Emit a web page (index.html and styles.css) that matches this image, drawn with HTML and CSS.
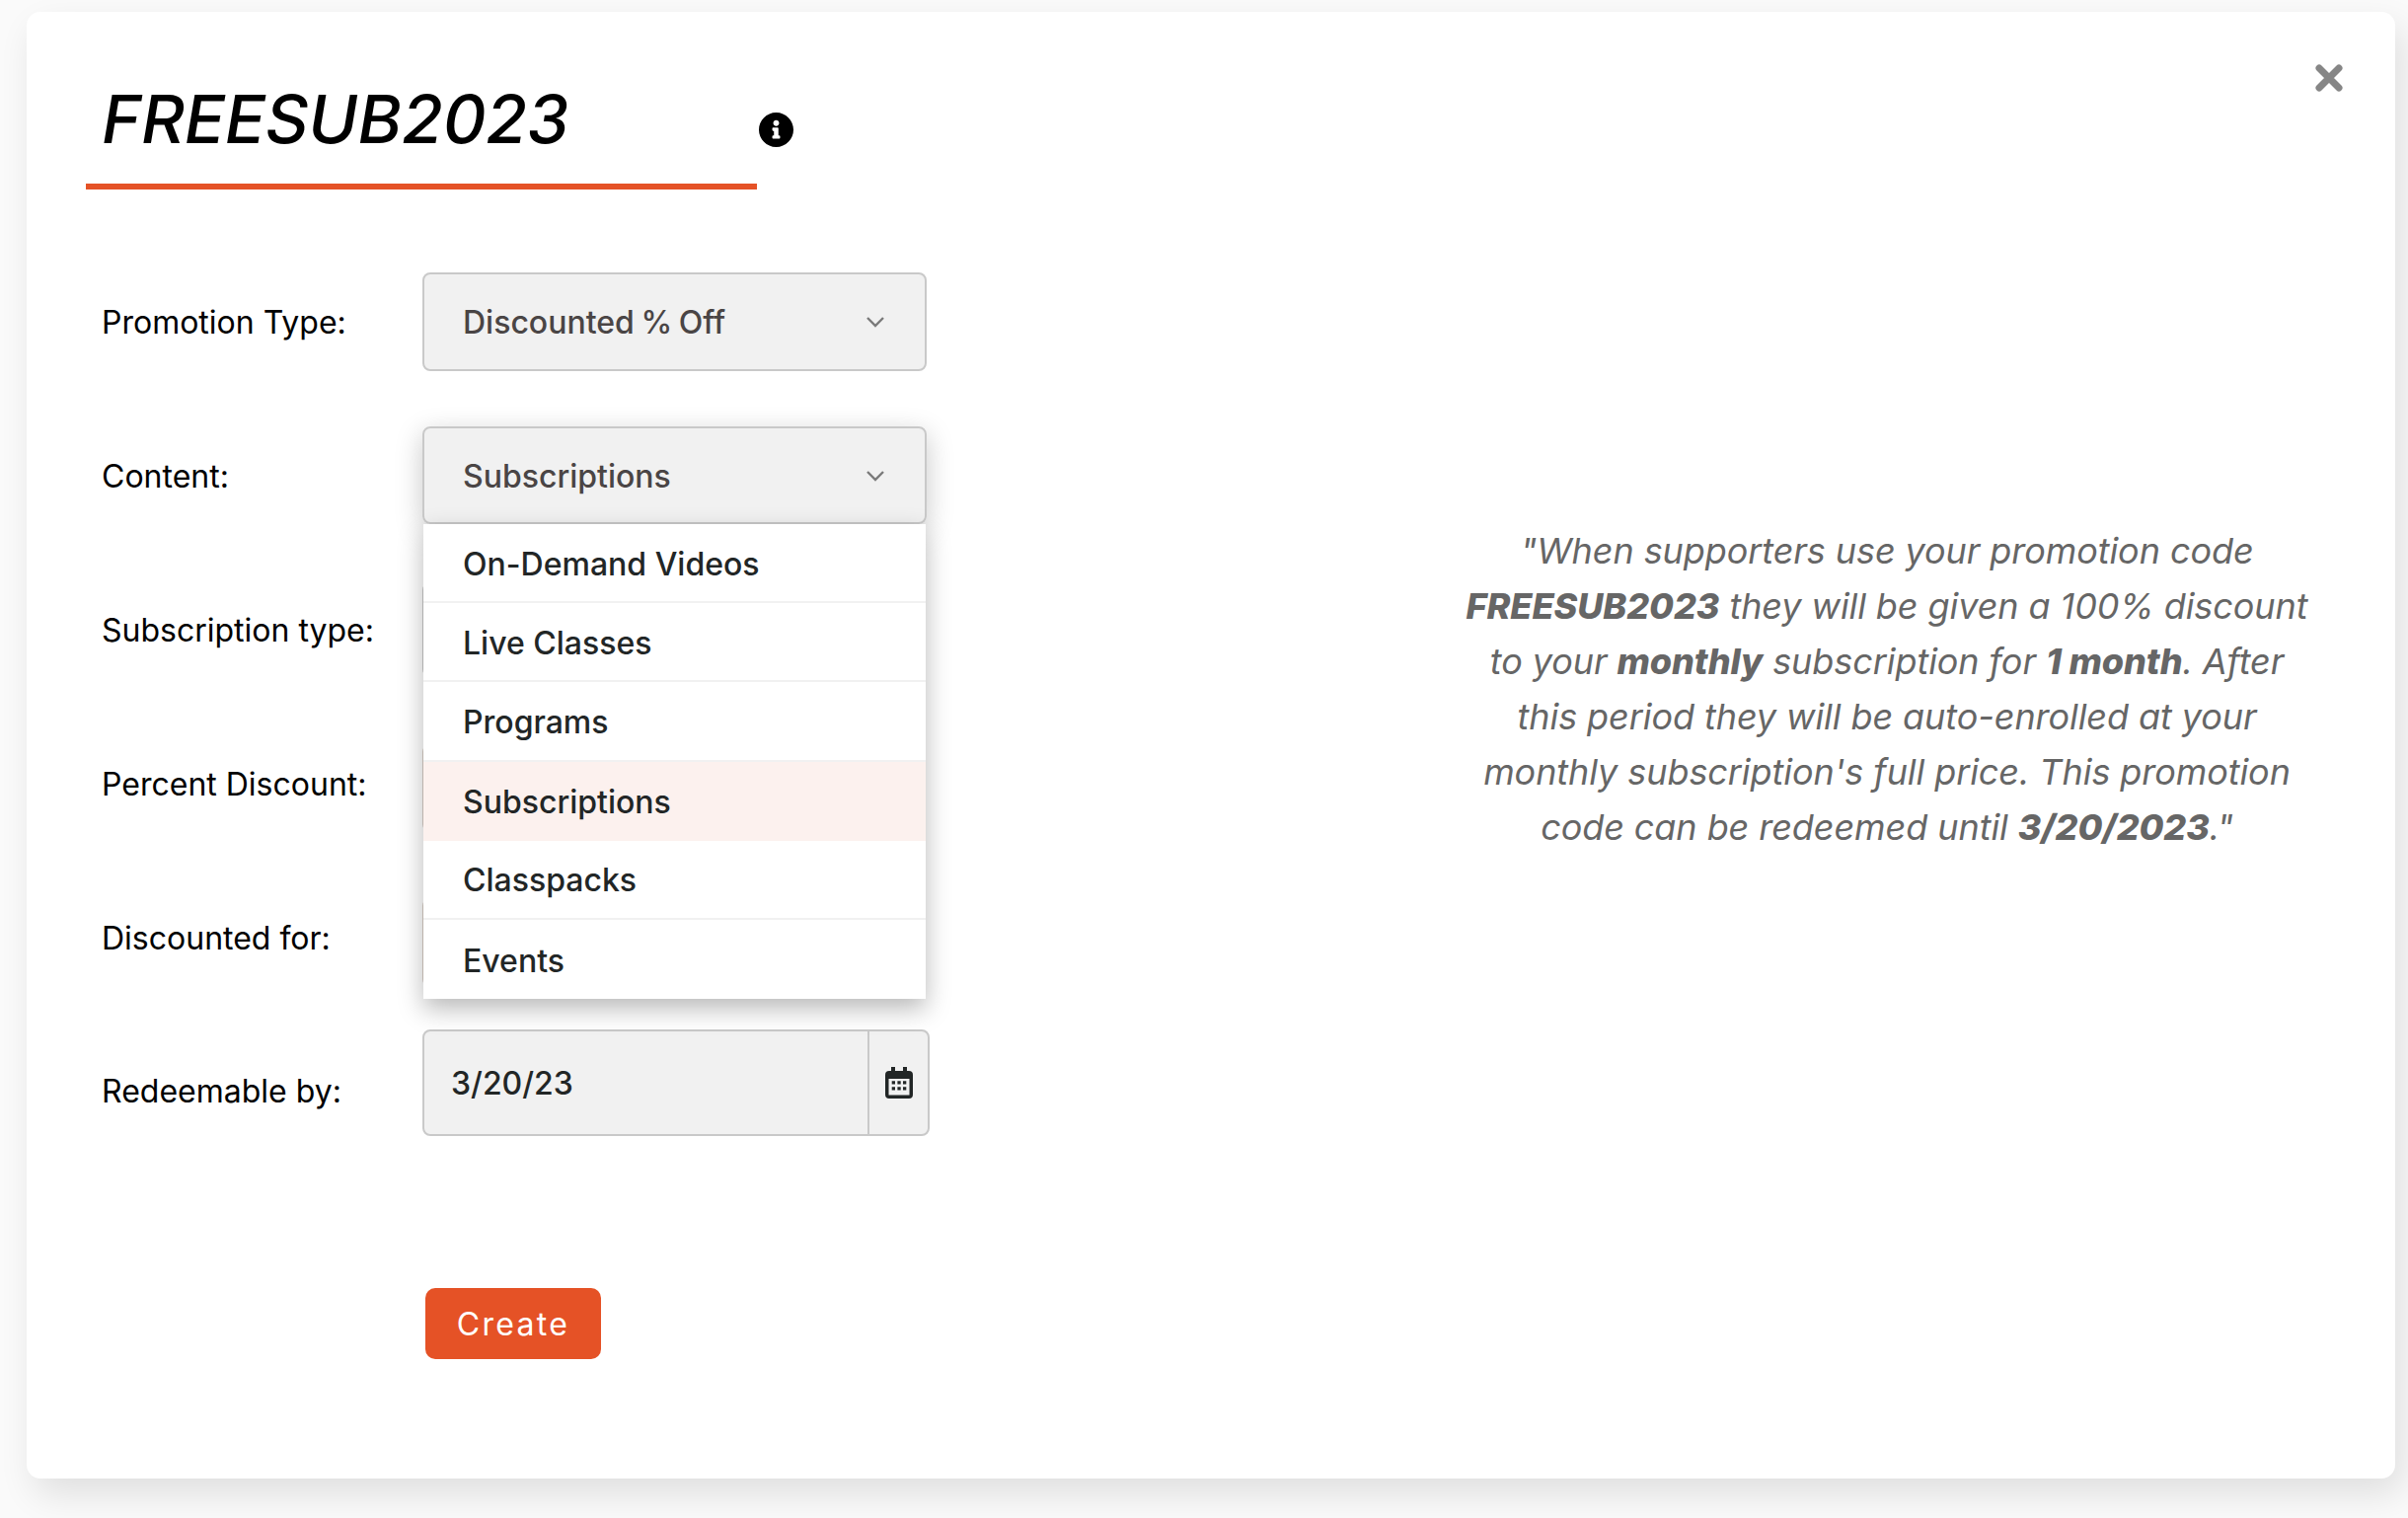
FILE: index.html
```html
<!DOCTYPE html>
<html lang="en">

<head>
    <meta charset="UTF-8">
    <title>Promotion</title>
    <link rel="stylesheet" href="styles.css">
</head>

<body>

    <div class="modal">

        <svg class="close" viewBox="0 0 28 28"><path d="M4 4L24 24M24 4L4 24" /></svg>

        <div class="form-col">

            <!-- Promotion code -->
            <div class="title-row">
                <div class="promo-code">FREESUB2023</div>
                <svg class="info-icon" viewBox="8 8 496 496"><path d="M256 8C119.043 8 8 119.083 8 256c0 136.997 111.043 248 248 248s248-111.003 248-248C504 119.083 392.957 8 256 8zm0 110c23.196 0 42 18.804 42 42s-18.804 42-42 42-42-18.804-42-42 18.804-42 42-42zm56 254c0 6.627-5.373 12-12 12h-88c-6.627 0-12-5.373-12-12v-24c0-6.627 5.373-12 12-12h12v-64h-12c-6.627 0-12-5.373-12-12v-24c0-6.627 5.373-12 12-12h64c6.627 0 12 5.373 12 12v100h12c6.627 0 12 5.373 12 12v24z" /></svg>
            </div>

            <!-- Fields -->
            <div class="row row-type">
                <label class="label">Promotion Type:</label>
                <div class="field select">
                    <span>Discounted % Off</span>
                    <svg class="chevron" viewBox="0 0 20 12"><path d="M2 2L10 10L18 2" /></svg>
                </div>
            </div>

            <div class="row row-content">
                <label class="label">Content:</label>
                <div class="select-wrap">
                    <div class="field select">
                        <span>Subscriptions</span>
                        <svg class="chevron" viewBox="0 0 20 12"><path d="M2 2L10 10L18 2" /></svg>
                    </div>
                    <ul class="dropdown">
                        <li>On-Demand Videos</li>
                        <li>Live Classes</li>
                        <li>Programs</li>
                        <li class="selected">Subscriptions</li>
                        <li>Classpacks</li>
                        <li>Events</li>
                    </ul>
                </div>
            </div>

            <div class="row row-sub">
                <label class="label">Subscription type:</label>
                <div class="field covered"></div>
            </div>

            <div class="row row-percent">
                <label class="label">Percent Discount:</label>
                <div class="field covered tinted"></div>
            </div>

            <div class="row row-for">
                <label class="label">Discounted for:</label>
                <div class="field covered tinted"></div>
            </div>

            <div class="row row-date">
                <label class="label">Redeemable by:</label>
                <div class="field date">
                    <span class="date-value">3/20/23</span>
                    <div class="date-btn">
                        <svg class="calendar" viewBox="0 0 28 32">
                            <path d="M6 0h4v5H6zM18 0h4v5h-4z" />
                            <path fill-rule="evenodd" d="M4 4h20a4 4 0 0 1 4 4v20a4 4 0 0 1-4 4H4a4 4 0 0 1-4-4V8a4 4 0 0 1 4-4zM3.5 12v16.5h21V12z" />
                            <path d="M6.7 14.3H10v3.300H6.700zM12.400 14.300h3.300v3.300h-3.300zM18 14.300h3.300v3.300H18zM6.700 20.300H10v3.300H6.700zM12.400 20.300h3.300v3.300h-3.300zM18 20.300h3.300v3.300H18z" />
                        </svg>
                    </div>
                </div>
            </div>

            <button class="create-btn">Create</button>
        </div>

        <!-- Summary -->
        <p class="summary">
            "When supporters use your promotion code<br>
            <strong>FREESUB2023</strong> they will be given a 100% discount<br>
            to your <strong>monthly</strong> subscription for <strong>1 month</strong>. After<br>
            this period they will be auto-enrolled at your<br>
            monthly subscription's full price. This promotion<br>
            code can be redeemed until <strong>3/20/2023</strong>."
        </p>

    </div>

</body>

</html>
```

FILE: styles.css
```css
* {
    box-sizing: border-box;
}

body {
    font-family: Inter, "Liberation Sans", sans-serif;
    background-color: #fafafa;
    margin: 0;
    height: 100vh;
    overflow: hidden;
    padding: 12px 13px 40px 27px;
}

.modal {
    position: relative;
    display: flex;
    height: 1486px;
    padding-left: 60px;
    background-color: #fff;
    border-radius: 14px;
    box-shadow: 8px 16px 36px rgba(0, 0, 0, 0.11);
}

.close {
    position: absolute;
    top: 53px;
    right: 53px;
    width: 28px;
    height: 28px;
    fill: none;
    stroke: #868686;
    stroke-width: 7;
    stroke-linecap: round;
}

.form-col {
    width: 860px;
    flex-shrink: 0;
}

.title-row {
    display: flex;
    height: 180px;
    margin-bottom: 84px;
}

.promo-code {
    width: 680px;
    height: 180px;
    padding: 68px 0 0 16px;
    border-bottom: 6px solid #e55226;
    font-size: 68px;
    line-height: 80px;
    font-style: italic;
    font-weight: 550;
    letter-spacing: -0.2px;
    color: #000;
}

.info-icon {
    width: 35px;
    height: 35px;
    margin: 102px 0 0 1.5px;
    fill: #000;
}

.row {
    display: flex;
    align-items: center;
}

.label {
    width: 341px;
    padding-left: 16px;
    font-size: 32px;
    color: #000;
}

.field {
    position: relative;
    width: 511px;
    height: 100%;
    background-color: #f1f1f1;
    border: 2px solid #c9c9c9;
    border-radius: 8px;
}

/* these sit behind the open dropdown, only the left edge shows */
.covered {
    width: 505px;
}

.row-type {
    height: 100px;
    margin-bottom: 56px;
}

.row-content {
    height: 99px;
    margin-bottom: 59px;
}

.row-content .label {
    padding-top: 2px;
}

.row-sub {
    height: 96px;
    margin-bottom: 68px;
}

.row-percent {
    height: 89px;
    margin-bottom: 67px;
}

.row-percent .label {
    padding-bottom: 8px;
}

.row-for {
    height: 90px;
    margin-bottom: 43px;
}

.row-for .label {
    padding-bottom: 10px;
}

.row-date {
    height: 108px;
    margin-bottom: 154px;
}

.row-date .label {
    padding-top: 16px;
}

.tinted {
    border-color: #d9cfc7;
}

.select {
    display: flex;
    align-items: center;
    justify-content: space-between;
    padding: 0 40px 0 39px;
    font-size: 32px;
    font-weight: 500;
    word-spacing: -2px;
    color: #4a4545;
}

.select-wrap .select {
    padding-top: 1px;
}

.chevron {
    width: 20px;
    height: 12px;
    fill: none;
    stroke: #7a7a7a;
    stroke-width: 2.4;
}

.select-wrap {
    position: relative;
    height: 100%;
    box-shadow: 0 8px 28px rgba(0, 0, 0, 0.22);
    border-radius: 8px;
}

.dropdown {
    position: absolute;
    z-index: 5;
    top: 100%;
    left: 1px;
    right: 1px;
    margin: 0;
    padding: 0;
    list-style: none;
    background-color: #fff;
    box-shadow: 0 10px 24px rgba(0, 0, 0, 0.28);
}

.dropdown li {
    display: flex;
    align-items: center;
    height: 80.2px;
    padding: 2px 0 0 40px;
    border-bottom: 2px solid #f1f1f1;
    font-size: 32px;
    font-weight: 500;
    color: #222626;
}

.dropdown li:last-child {
    border-bottom: none;
}

.dropdown li.selected {
    background-color: #fcf1ee;
    border-bottom: none;
}

.date {
    display: flex;
    width: 514px;
}

.date-value {
    flex: 1;
    align-self: center;
    padding-left: 27px;
    font-size: 32px;
    font-weight: 500;
    color: #222626;
}

.date-btn {
    display: flex;
    align-items: center;
    justify-content: center;
    width: 61px;
    border-left: 2px solid #c9c9c9;
}

.calendar {
    width: 28px;
    height: 32px;
    fill: #222626;
}

.create-btn {
    display: block;
    width: 178px;
    height: 72px;
    margin-left: 344px;
    border: none;
    border-radius: 10px;
    background-color: #e55226;
    color: #fff;
    font-family: inherit;
    font-size: 32px;
    letter-spacing: 2.3px;
}

.summary {
    width: 1000px;
    margin: 518px 0 0 465px;
    text-align: center;
    font-size: 36px;
    line-height: 56px;
    font-style: italic;
    letter-spacing: -0.08px;
    color: #666;
}

.summary strong {
    font-weight: 800;
}
```
